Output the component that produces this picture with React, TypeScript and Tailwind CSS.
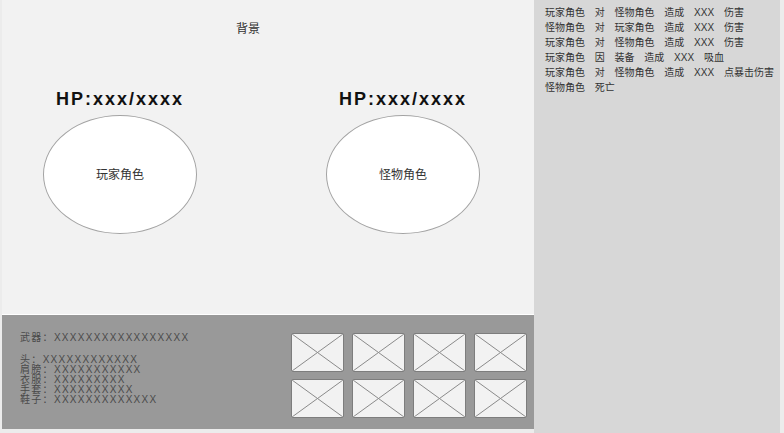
import React from "react";

const logs = [
    "玩家角色 对 怪物角色 造成 XXX 伤害",
    "怪物角色 对 玩家角色 造成 XXX 伤害",
    "玩家角色 对 怪物角色 造成 XXX 伤害",
    "玩家角色 因 装备 造成 XXX 吸血",
    "玩家角色 对 怪物角色 造成 XXX 点暴击伤害",
    "怪物角色 死亡",
];

const gear = [
    ["头", "XXXXXXXXXXXX"],
    ["肩膀", "XXXXXXXXXXX"],
    ["衣服", "XXXXXXXXX"],
    ["手套", "XXXXXXXXXX"],
    ["鞋子", "XXXXXXXXXXXXX"],
];

function Fighter({name}: {name: string}) {
    return (
        <div className="w-[160px] flex flex-col items-center">
            <div className="h-[22px] leading-[22px] text-[18px] font-bold tracking-[2px] text-[#111]">
                HP:xxx/xxxx
            </div>
            <div className="mt-[5px] w-[154px] h-[119px] rounded-[50%] bg-white border border-[#a3a3a3] flex items-center justify-center text-[12px] text-[#333]">
                {name}
            </div>
        </div>
    );
}

function Slot() {
    return (
        <div className="w-[53px] h-[39px] bg-[#f2f2f2] border-[1.5px] border-[#7d7d7d] rounded-[2px] overflow-hidden">
            <svg width="100%" height="100%" viewBox="0 0 50 36" preserveAspectRatio="none">
                <line x1="0" y1="0" x2="50" y2="36" stroke="#8a8a8a" strokeWidth="1" vectorEffect="non-scaling-stroke"/>
                <line x1="50" y1="0" x2="0" y2="36" stroke="#8a8a8a" strokeWidth="1" vectorEffect="non-scaling-stroke"/>
            </svg>
        </div>
    );
}

export default function App() {
    return (
        <div className="w-[784px] h-[433px] flex pl-[2px] pr-[4px] bg-[#ececec] overflow-hidden [font-family:'Liberation_Sans','Noto_Sans_CJK_SC',sans-serif]">
            <div className="w-[532px] flex flex-col pb-[4px]">
                {/* battle field */}
                <div className="h-[315px] bg-[#f2f2f2] border-b border-white flex flex-col pt-[22px]">
                    <div className="pl-[234px] text-[12px] leading-[14px] text-[#333]">背景</div>
                    <div className="mt-[52px] flex pl-[38px] gap-[123px]">
                        <Fighter name="玩家角色"/>
                        <Fighter name="怪物角色"/>
                    </div>
                </div>

                {/* equipment */}
                <div className="flex-1 bg-[#999999] flex pl-[18px] pr-[7px] pt-[16px]">
                    <div className="flex flex-col text-[10px] tracking-[1.3px] text-[#4a4a4a]">
                        <div className="leading-[14px]">武器：XXXXXXXXXXXXXXXXX</div>
                        <div className="mt-[10px] flex flex-col">
                            {gear.map(([k, v]) => (
                                <div key={k} className="leading-[10px] h-[10px]">{k}：{v}</div>
                            ))}
                        </div>
                    </div>
                    <div className="ml-auto mt-[2px] grid grid-cols-4 gap-x-[8px] gap-y-[7px] h-fit">
                        {Array.from({length: 8}).map((_, i) => (
                            <Slot key={i}/>
                        ))}
                    </div>
                </div>
            </div>

            {/* battle log */}
            <div className="flex-1 bg-[#d7d7d7] pl-[11px] pt-[5px] text-[10px] text-[#333] [word-spacing:7px]">
                {logs.map((l, i) => (
                    <div key={i} className="leading-[15px] whitespace-nowrap">{l}</div>
                ))}
            </div>
        </div>
    );
}
